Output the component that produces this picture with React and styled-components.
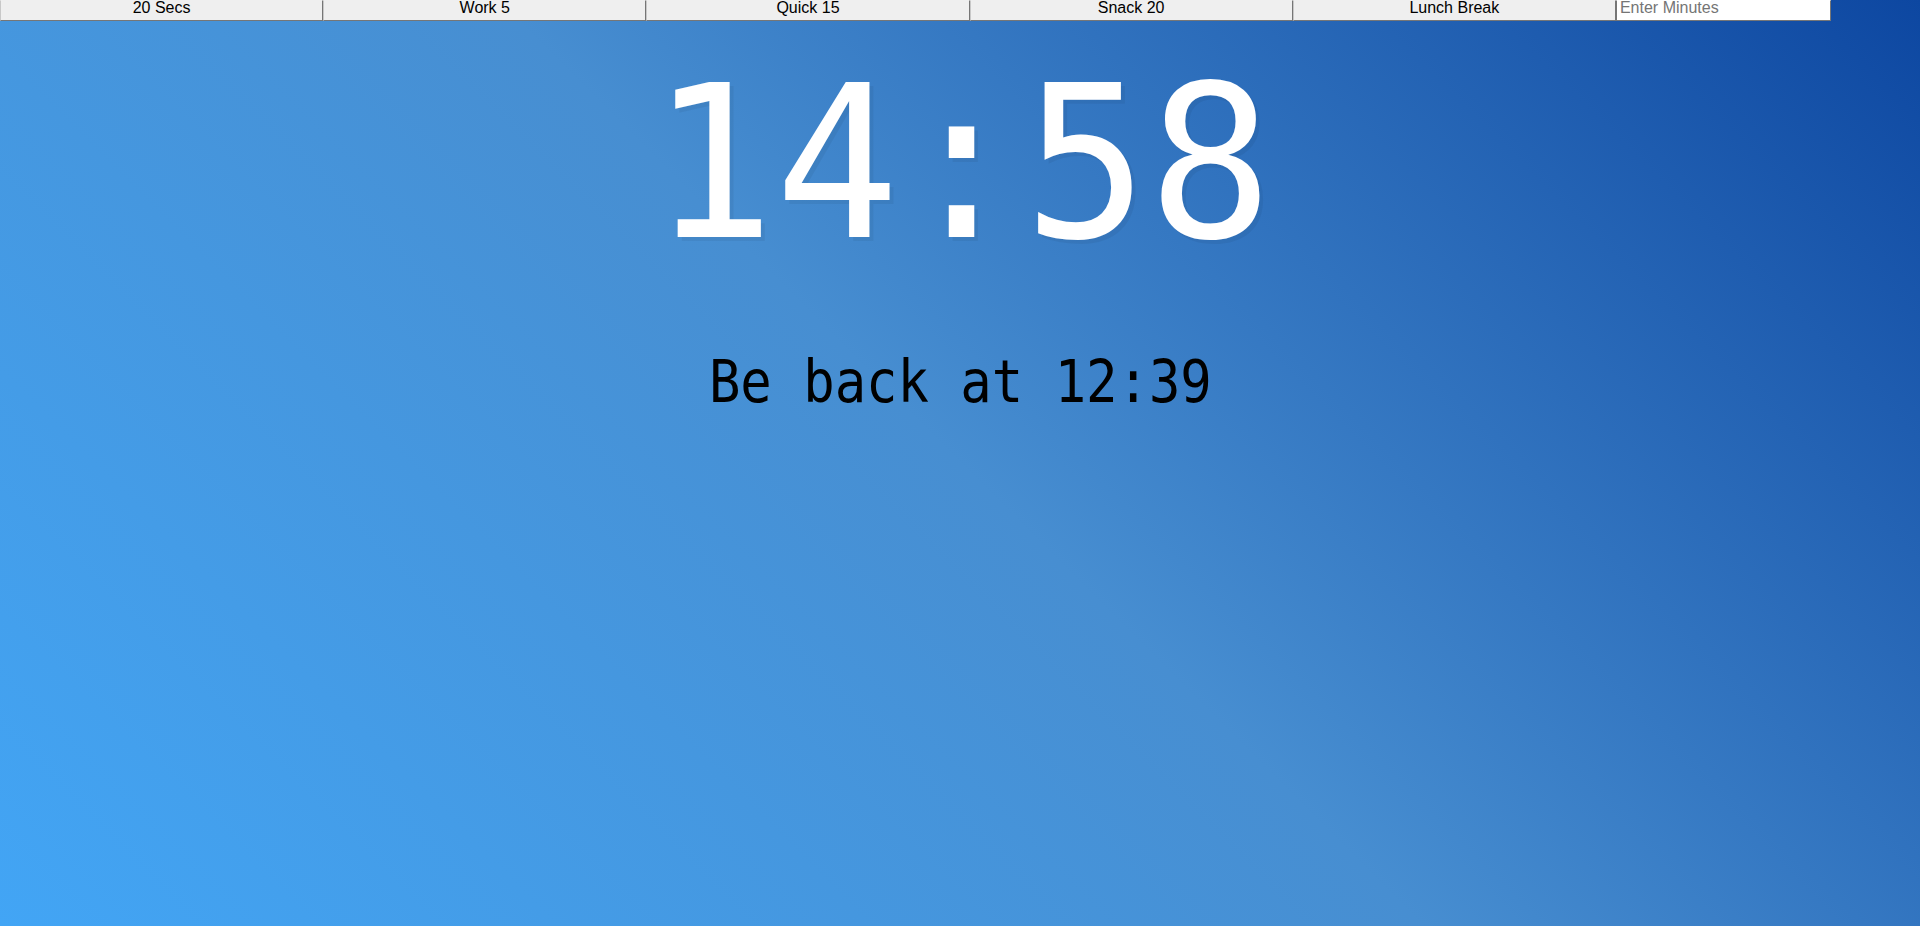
import styled, { createGlobalStyle } from "styled-components";

const GlobalStyle = createGlobalStyle`
  html {
    box-sizing: border-box;
    font-size: 10px;
    background: linear-gradient(45deg, #42a5f5 0%, #478ed1 50%, #0d47a1 100%);
    min-height: 100%;
  }
  *, *:before, *:after {
    box-sizing: inherit;
  }
  body {
    margin: 0;
    min-height: 926px;
    text-align: center;
    font-family: "DejaVu Sans Mono", monospace;
  }
`;

const Timer = styled.div`
  display: flex;
  flex-direction: column;
  min-height: 926px;
`;

const Controls = styled.div`
  display: flex;
  height: 21px;
`;

const TimerButton = styled.button`
  flex: 0 0 323.2px;
  height: 21px;
  margin: 0;
  padding: 0 6px 5px;
  background: #efefef;
  border: 1px solid #767676;
  border-top-color: #efefef;
  border-left-color: #c8c8c8;
  color: #000;
  font-family: "Liberation Sans", Arial, sans-serif;
  font-size: 16px;
  line-height: 14px;
  cursor: pointer;
`;

const MinutesInput = styled.input`
  flex: 0 0 211px;
  height: 21px;
  margin: 0;
  padding: 0 3px 5px;
  background: #fff;
  border: 1px solid #767676;
  border-top-color: #fff;
  font-family: "Liberation Sans", Arial, sans-serif;
  font-size: 16px;
  line-height: 14px;
  color: #000;
  outline: none;

  &::placeholder {
    color: #757575;
  }
`;

const Display = styled.div`
  display: flex;
  flex-direction: column;
  align-items: center;
  padding-top: 36px;
`;

const TimeLeft = styled.h1`
  margin: 0 0 0 4px;
  font-family: "DejaVu Sans Mono", monospace;
  font-weight: normal;
  font-size: 213px;
  line-height: 213px;
  color: #fff;
  text-shadow: 4px 4px 0 rgba(0, 0, 0, 0.05);
  transform: scaleX(0.97);
  white-space: nowrap;
`;

const EndTime = styled.p`
  margin: 83px 0 0;
  font-family: "DejaVu Sans Mono", monospace;
  font-size: 58px;
  line-height: 58px;
  color: #000;
  transform: scaleX(0.9);
  white-space: pre;
`;

const presets = ["20 Secs", "Work 5", "Quick 15", "Snack 20", "Lunch Break"];

export default function App() {
  return (
    <>
      <GlobalStyle />
      <Timer>
        <Controls>
          {presets.map((p) => (
            <TimerButton key={p}>{p}</TimerButton>
          ))}
          <MinutesInput type="text" name="minutes" placeholder="Enter Minutes" />
        </Controls>
        <Display>
          <TimeLeft>14:58</TimeLeft>
          <EndTime>Be back at 12:39</EndTime>
        </Display>
      </Timer>
    </>
  );
}
